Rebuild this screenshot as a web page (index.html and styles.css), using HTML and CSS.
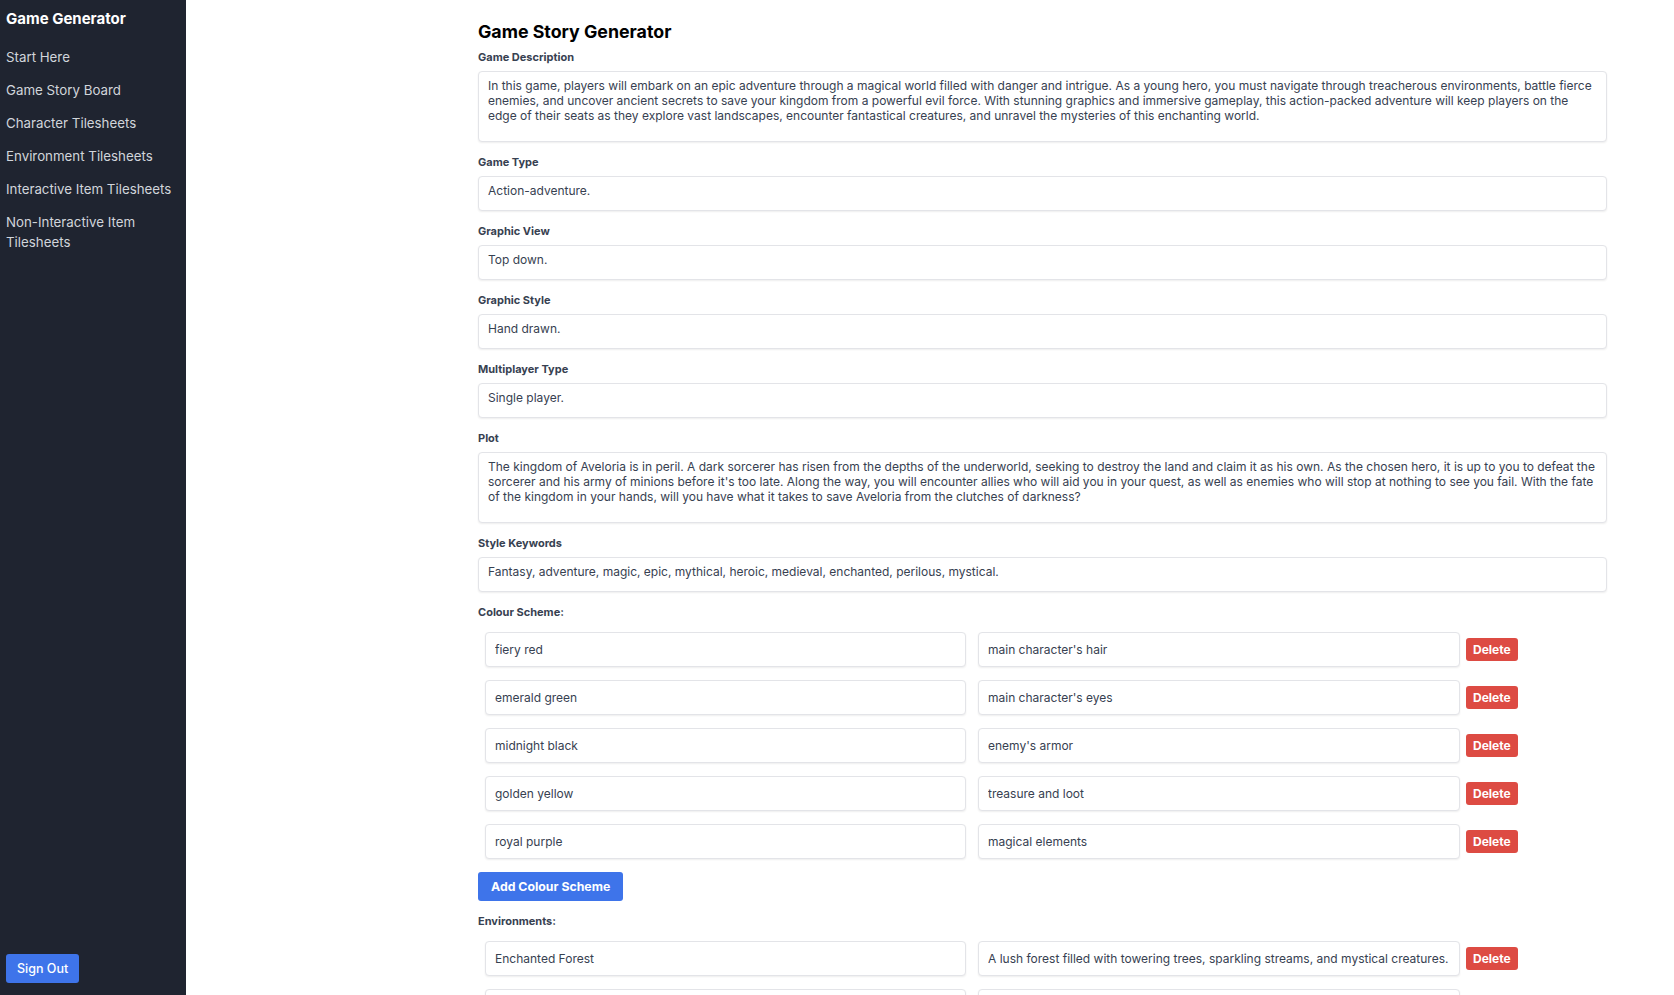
FILE: index.html
```html
<!DOCTYPE html>
<html lang="en">
<head>
<meta charset="utf-8">
<title>Game Generator</title>
<link rel="stylesheet" href="styles.css">
</head>
<body>
<div class="app">
  <aside class="sidebar">
    <div class="sidebar-top">
      <div class="brand">Game Generator</div>
      <nav class="nav">
        <a class="nav-item" href="#">Start Here</a>
        <a class="nav-item" href="#">Game Story Board</a>
        <a class="nav-item" href="#">Character Tilesheets</a>
        <a class="nav-item" href="#">Environment Tilesheets</a>
        <a class="nav-item" href="#">Interactive Item Tilesheets</a>
        <a class="nav-item" href="#">Non-Interactive Item Tilesheets</a>
      </nav>
    </div>
    <button class="btn btn-signout" type="button">Sign Out</button>
  </aside>

  <main class="main">
    <h1 class="page-title">Game Story Generator</h1>

    <div class="field">
      <label class="label">Game Description</label>
      <textarea class="box box-area" readonly>In this game, players will embark on an epic adventure through a magical world filled with danger and intrigue. As a young hero, you must navigate through treacherous environments, battle fierce enemies, and uncover ancient secrets to save your kingdom from a powerful evil force. With stunning graphics and immersive gameplay, this action-packed adventure will keep players on the edge of their seats as they explore vast landscapes, encounter fantastical creatures, and unravel the mysteries of this enchanting world.</textarea>
    </div>

    <div class="field">
      <label class="label">Game Type</label>
      <textarea class="box box-area box-line" rows="1" readonly>Action-adventure.</textarea>
    </div>

    <div class="field">
      <label class="label">Graphic View</label>
      <textarea class="box box-area box-line" rows="1" readonly>Top down.</textarea>
    </div>

    <div class="field">
      <label class="label">Graphic Style</label>
      <textarea class="box box-area box-line" rows="1" readonly>Hand drawn.</textarea>
    </div>

    <div class="field">
      <label class="label">Multiplayer Type</label>
      <textarea class="box box-area box-line" rows="1" readonly>Single player.</textarea>
    </div>

    <div class="field">
      <label class="label">Plot</label>
      <textarea class="box box-area" readonly>The kingdom of Aveloria is in peril. A dark sorcerer has risen from the depths of the underworld, seeking to destroy the land and claim it as his own. As the chosen hero, it is up to you to defeat the sorcerer and his army of minions before it's too late. Along the way, you will encounter allies who will aid you in your quest, as well as enemies who will stop at nothing to see you fail. With the fate of the kingdom in your hands, will you have what it takes to save Aveloria from the clutches of darkness?</textarea>
    </div>

    <div class="field">
      <label class="label">Style Keywords</label>
      <textarea class="box box-area box-line" rows="1" readonly>Fantasy, adventure, magic, epic, mythical, heroic, medieval, enchanted, perilous, mystical.</textarea>
    </div>

    <div class="field field-list">
      <label class="label">Colour Scheme:</label>
      <div class="pair-list">
        <div class="pair-row">
          <input class="box box-input pair-input" type="text" value="fiery red">
          <input class="box box-input pair-input" type="text" value="main character's hair">
          <button class="btn btn-delete" type="button">Delete</button>
        </div>
        <div class="pair-row">
          <input class="box box-input pair-input" type="text" value="emerald green">
          <input class="box box-input pair-input" type="text" value="main character's eyes">
          <button class="btn btn-delete" type="button">Delete</button>
        </div>
        <div class="pair-row">
          <input class="box box-input pair-input" type="text" value="midnight black">
          <input class="box box-input pair-input" type="text" value="enemy's armor">
          <button class="btn btn-delete" type="button">Delete</button>
        </div>
        <div class="pair-row">
          <input class="box box-input pair-input" type="text" value="golden yellow">
          <input class="box box-input pair-input" type="text" value="treasure and loot">
          <button class="btn btn-delete" type="button">Delete</button>
        </div>
        <div class="pair-row">
          <input class="box box-input pair-input" type="text" value="royal purple">
          <input class="box box-input pair-input" type="text" value="magical elements">
          <button class="btn btn-delete" type="button">Delete</button>
        </div>
      </div>
      <button class="btn btn-add" type="button">Add Colour Scheme</button>
    </div>

    <div class="field field-list">
      <label class="label">Environments:</label>
      <div class="pair-list">
        <div class="pair-row">
          <input class="box box-input pair-input" type="text" value="Enchanted Forest">
          <input class="box box-input pair-input" type="text" value="A lush forest filled with towering trees, sparkling streams, and mystical creatures.">
          <button class="btn btn-delete" type="button">Delete</button>
        </div>
        <div class="pair-row">
          <input class="box box-input pair-input" type="text" value="Dark Caverns">
          <input class="box box-input pair-input" type="text" value="A network of dark, winding caves filled with dangerous monsters and hidden treasures.">
          <button class="btn btn-delete" type="button">Delete</button>
        </div>
      </div>
    </div>
  </main>
</div>
</body>
</html>
```

FILE: styles.css
```css
* {
  box-sizing: border-box;
}

html, body {
  margin: 0;
  padding: 0;
  height: 100%;
}

body {
  font-family: Inter, "Noto Sans", "Liberation Sans", sans-serif;
  color: #111827;
  background: #ffffff;
}

.app {
  display: flex;
  height: 100vh;
  overflow: hidden;
}

/* Sidebar */
.sidebar {
  width: 186px;
  flex-shrink: 0;
  background: #1f2430;
  display: flex;
  flex-direction: column;
  justify-content: space-between;
  padding: 7px 6px 12px 6px;
}

.brand {
  color: #ffffff;
  font-size: 15px;
  font-weight: 700;
  line-height: 24px;
  margin-bottom: 10px;
}

.nav {
  display: flex;
  flex-direction: column;
  gap: 1px;
}

.nav-item {
  display: block;
  color: #d1d5db;
  text-decoration: none;
  font-size: 13.3px;
  line-height: 20px;
  padding: 6px 0;
}

.btn {
  font-family: inherit;
  border: none;
  cursor: pointer;
  color: #ffffff;
}

.btn-signout {
  align-self: flex-start;
  background: #3e74ea;
  height: 29px;
  padding: 0 11px;
  border-radius: 3px;
  font-size: 12.5px;
  font-weight: 500;
}

/* Main */
.main {
  flex: 1;
  min-width: 0;
  padding: 18px 67px 0 292px;
  overflow: hidden;
}

.page-title {
  margin: 0 0 4px 0;
  font-size: 17.8px;
  line-height: 27px;
  font-weight: 700;
  color: #000000;
}

.field {
  display: flex;
  flex-direction: column;
  margin-bottom: 12px;
}

.label {
  font-size: 11px;
  line-height: 16px;
  font-weight: 700;
  color: #374151;
  margin-bottom: 6px;
}

.box {
  display: block;
  width: 100%;
  font-family: inherit;
  font-size: 12px;
  color: #374151;
  background: #ffffff;
  border: 1px solid #e3e4e8;
  border-radius: 4px;
  box-shadow: 0 1px 2px rgba(0, 0, 0, 0.07);
  outline: none;
}

.box-input {
  height: 35px;
  padding: 0 9px;
}

.box-area {
  height: 71px;
  padding: 6px 9px;
  line-height: 15px;
  resize: none;
  overflow: hidden;
}

.box-line {
  height: 35px;
}

/* Pair lists */
.pair-list {
  display: flex;
  flex-direction: column;
  gap: 13px;
  padding-top: 6px;
}

.pair-row {
  display: grid;
  grid-template-columns: 1fr 1fr 141px;
  align-items: center;
}

.pair-input {
  width: auto;
  margin: 0 6px 0 6px;
}

.pair-row .pair-input:first-child {
  margin-left: 7px;
}

.btn-delete {
  justify-self: start;
  height: 23px;
  padding: 0 7px;
  background: #dd4b43;
  border-radius: 3px;
  font-size: 12px;
  font-weight: 700;
}

.btn-add {
  align-self: flex-start;
  margin-top: 13px;
  height: 29px;
  padding: 0 13px;
  background: #3e74ea;
  border-radius: 3px;
  font-size: 12.3px;
  font-weight: 700;
}
```
